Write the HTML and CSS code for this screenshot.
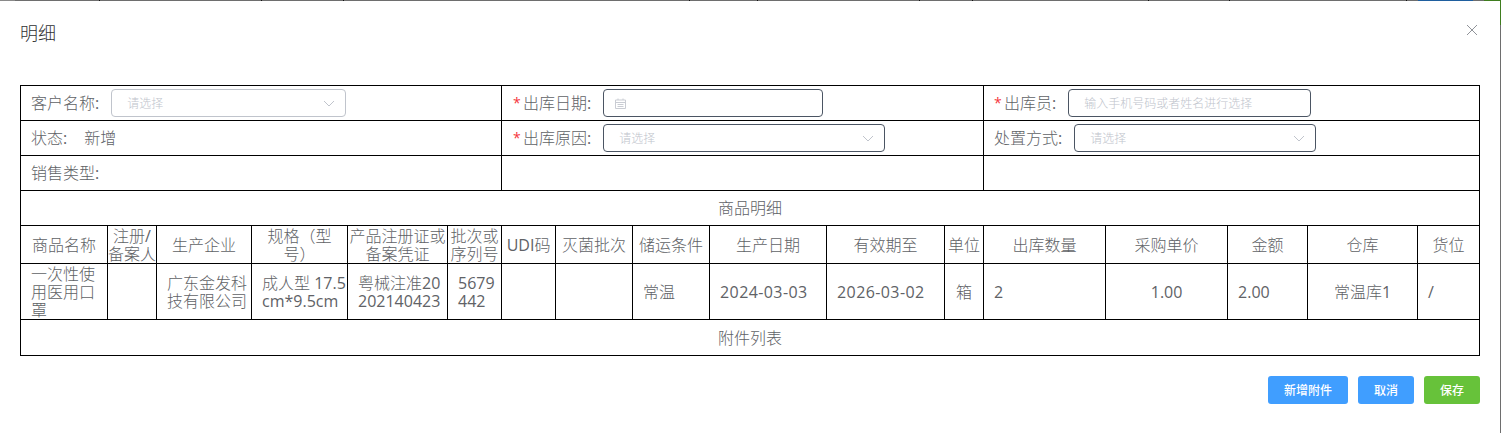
FILE: index.html
```html
<!DOCTYPE html>
<html lang="zh">
<head>
<meta charset="utf-8">
<title>明细</title>
<link rel="stylesheet" href="styles.css">
</head>
<body>
<div class="backdrop">
  <div class="top-strip"></div>
  <div class="dialog">
    <header class="dialog-head">
      <span class="dialog-title">明细</span>
      <svg class="close" width="12" height="12" viewBox="0 0 12 12"><path d="M1 1 L11 11 M11 1 L1 11" stroke="#909399" stroke-width="1" fill="none"/></svg>
    </header>
    <table class="sheet">
      <colgroup>
        <col class="c1"><col class="c2"><col class="c3"><col class="c4"><col class="c5"><col class="c6"><col class="c7"><col class="c8"><col class="c9"><col class="c10"><col class="c11"><col class="c12"><col class="c13"><col class="c14"><col class="c15"><col class="c16"><col class="c17">
      </colgroup>
      <tr class="r-form">
        <td colspan="6" class="form-cell"><div class="field"><span class="lbl">客户名称<b class="num">:</b></span><div class="control w235 muted"><span class="ph">请选择</span><svg class="chev" width="12" height="7" viewBox="0 0 12 7"><path d="M1 1 L6 6 L11 1" stroke="#c0c4cc" fill="none"/></svg></div></div></td>
        <td colspan="6" class="form-cell mid"><div class="field"><span class="star">*</span><span class="lbl">出库日期<b class="num">:</b></span><div class="control w220 date"><svg class="cal" width="11" height="11" viewBox="0 0 11 11"><path d="M.5 2 H10.5 V10.5 H.5 Z M.5 4.5 H10.5 M3 .5 V2 M8 .5 V2 M2.5 6.5 H8.5 M2.5 8.5 H8.5" stroke="#c9ccd3" fill="none"/></svg></div></div></td>
        <td colspan="5" class="form-cell"><div class="field"><span class="star">*</span><span class="lbl">出库员<b class="num">:</b></span><div class="control w243"><span class="ph">输入手机号码或者姓名进行选择</span></div></div></td>
      </tr>
      <tr class="r-form">
        <td colspan="6" class="form-cell"><div class="field"><span class="lbl">状态<b class="num">:</b></span><span class="status">新增</span></div></td>
        <td colspan="6" class="form-cell mid"><div class="field"><span class="star">*</span><span class="lbl">出库原因<b class="num">:</b></span><div class="control w282"><span class="ph">请选择</span><svg class="chev" width="12" height="7" viewBox="0 0 12 7"><path d="M1 1 L6 6 L11 1" stroke="#c0c4cc" fill="none"/></svg></div></div></td>
        <td colspan="5" class="form-cell"><div class="field"><span class="lbl">处置方式<b class="num">:</b></span><div class="control w242"><span class="ph">请选择</span><svg class="chev" width="12" height="7" viewBox="0 0 12 7"><path d="M1 1 L6 6 L11 1" stroke="#c0c4cc" fill="none"/></svg></div></div></td>
      </tr>
      <tr class="r-form">
        <td colspan="6" class="form-cell"><div class="field"><span class="lbl">销售类型<b class="num">:</b></span></div></td>
        <td colspan="6"></td>
        <td colspan="5"></td>
      </tr>
      <tr class="r-form"><td colspan="17">商品明细</td></tr>
      <tr class="r-head">
        <td>商品名称</td><td>注册<b class="num">/</b>备案人</td><td>生产企业</td><td class="spec">规格（型号）</td><td>产品注册证或备案凭证</td><td>批次或序列号</td><td><b class="num">UDI</b>码</td><td>灭菌批次</td><td>储运条件</td><td>生产日期</td><td>有效期至</td><td>单位</td><td>出库数量</td><td>采购单价</td><td>金额</td><td>仓库</td><td>货位</td>
      </tr>
      <tr class="r-data">
        <td>一次性使用医用口罩</td><td></td><td>广东金发科技有限公司</td><td>成人型 <b class="num">17.5cm*9.5cm</b></td><td>粤械注准<b class="num">20202140423</b></td><td><b class="num">5679442</b></td><td></td><td></td><td>常温</td><td class="date-text"><b class="num">2024-03-03</b></td><td class="date-text"><b class="num">2026-03-02</b></td><td class="center">箱</td><td><b class="num">2</b></td><td class="center"><b class="num">1.00</b></td><td><b class="num">2.00</b></td><td class="center">常温库<b class="num">1</b></td><td><b class="num">/</b></td>
      </tr>
      <tr class="r-foot"><td colspan="17">附件列表</td></tr>
    </table>
    <footer class="actions">
      <button class="btn blue b80">新增附件</button>
      <button class="btn blue b56">取消</button>
      <button class="btn green b56">保存</button>
    </footer>
  </div>
</div>
</body>
</html>
```
FILE: styles.css
```css
* { box-sizing: border-box; }
html, body { margin: 0; padding: 0; }
body { width: 1501px; height: 433px; overflow: hidden; background: #fff; font-family: "Open Sans", "Noto Sans CJK SC", sans-serif; color: #606266; }
.backdrop { width: 1501px; height: 433px; display: flex; flex-direction: column; padding-right: 1px; background: linear-gradient(to bottom, #3f7d1f 0 25px, #6e6e6e 25px); }
.top-strip { height: 1px; flex: none; margin-right: -1px; background: linear-gradient(to right, #8a8a8a 0 15px, #6e6e6e 15px 99px, #111 99px 100px, #6e6e6e 100px 261px, #111 261px 262px, #6e6e6e 262px 343px, #111 343px 344px, #6e6e6e 344px 689px, #111 689px 690px, #6e6e6e 690px 757px, #111 757px 758px, #6e6e6e 758px 919px, #111 919px 920px, #6e6e6e 920px 972px, #111 972px 973px, #6e6e6e 973px 1148px, #111 1148px 1149px, #6e6e6e 1149px 1229px, #111 1229px 1230px, #6e6e6e 1230px 1406px, #111 1406px 1407px, #6e6e6e 1407px 1418px, #1f5f9f 1418px 1473px, #6e6e6e 1473px 1484px, #3f7d1f 1484px); }
.dialog { flex: 1; background: #fff; padding: 0 20px; display: flex; flex-direction: column; }
.dialog-head { height: 84px; display: flex; justify-content: space-between; padding-top: 20px; }
.dialog-title { font-size: 18px; line-height: 24px; color: #303133; font-weight: 300; }
.close { margin-top: 3px; margin-right: 2px; }
.sheet { table-layout: fixed; width: 1460px; border-collapse: collapse; font-size: 16px; font-weight: 300; color: #606266; }
.sheet td { border: 1px solid #000; padding: 0; text-align: center; line-height: 18px; overflow-wrap: anywhere; word-break: break-all; }
.sheet td.spec { padding: 0 8px; }
.num { font-weight: 400; }
.c1 { width: 87px; } .c2 { width: 49px; } .c3 { width: 95px; } .c4 { width: 96px; } .c5 { width: 100px; } .c6 { width: 54px; } .c7 { width: 54px; } .c8 { width: 77px; } .c9 { width: 77px; } .c10 { width: 117px; } .c11 { width: 118px; } .c12 { width: 39px; } .c13 { width: 122px; } .c14 { width: 122px; } .c15 { width: 80px; } .c16 { width: 110px; } .c17 { width: 62px; }
.r-form { height: 35px; }
.r-head { height: 38px; }
.r-data { height: 56px; }
.r-foot { height: 36px; }
.sheet td.form-cell { text-align: left; padding-left: 10px; }
.sheet td.form-cell.mid { padding-left: 11px; }
.sheet .r-data td { padding: 0 0 0 10px; text-align: left; }
.sheet .r-data td.center { text-align: center; padding: 0; }
.sheet td.date-text { letter-spacing: .4px; }
.field { display: flex; align-items: center; height: 28px; }
.lbl { margin-right: 12px; white-space: nowrap; }
.star { color: #f5363c; font-size: 14px; font-weight: 400; width: 10px; flex: none; }
.status { margin-left: 5px; }
.control { height: 28px; border: 1px solid #4b5563; border-radius: 4px; display: flex; align-items: center; justify-content: space-between; padding: 0 10px 0 15px; font-size: 12px; background: #fff; }
.control.muted { border-color: #c0c4cc; }
.control.date { padding-left: 11px; justify-content: flex-start; }
.w235 { width: 235px; } .w220 { width: 220px; } .w243 { width: 243px; } .w282 { width: 282px; } .w242 { width: 242px; }
.ph { color: #c0c4cc; padding-top: 1px; }
.chev { flex: none; }
.actions { display: flex; justify-content: flex-end; gap: 10px; margin-top: 20px; }
.btn { height: 28px; border: 0; border-radius: 3px; color: #fff; font-family: inherit; font-size: 12px; font-weight: 500; padding: 0; }
.blue { background: #409eff; }
.green { background: #67c23a; }
.b80 { width: 80px; }
.b56 { width: 56px; }
```
